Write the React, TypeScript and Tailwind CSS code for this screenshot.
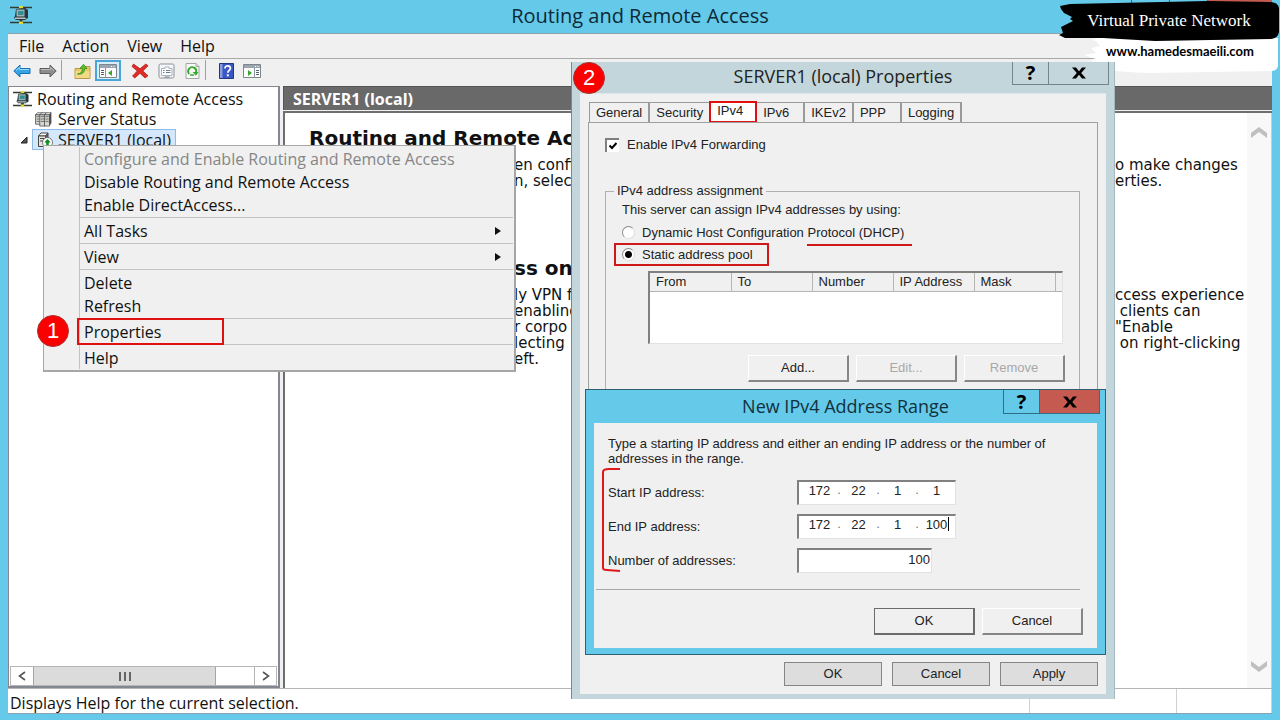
import {useState} from 'react';
import type {ReactNode} from 'react';
import clsx from 'clsx';

const UI = "font-['Open_Sans','Noto_Sans',sans-serif]";
const CLASSIC = "font-['Liberation_Sans',Arial,sans-serif]";
const DOC = "font-['DejaVu_Sans',Verdana,sans-serif]";

/* ---------- Icons ---------- */

function RoutingIcon({className}: {className?: string}) {
  return (
    <svg viewBox="0 0 22 18" className={className} aria-hidden="true">
      <path d="M0 1.5h22M0 16.5h22" stroke="#333c33" strokeWidth="1.6" />
      <path d="M11 1v16" stroke="#333c33" strokeWidth="3" />
      <path d="M9 0h4v2.5H9zM9 15.5h4V18H9z" fill="#e4dc2c" />
      <path d="M6 3l9-1 3 2v8l-3 2H6l-2-2 1-2z" fill="#26363a" />
      <path d="M6.5 3.5h8v7h-8z" fill="#9fb2b4" />
      <path d="M8 5h5.5v4H8z" fill="#2f8f94" />
      <path d="M5 11.5h10l1.5 1.5H5z" fill="#b9c4c4" />
    </svg>
  );
}

function ServersIcon({className}: {className?: string}) {
  return (
    <svg viewBox="0 0 18 16" className={className} aria-hidden="true">
      {[0.5, 5, 10].map((x, i) => (
        <g key={x} stroke="#4a4a4a" strokeWidth="0.8">
          <path d={`M${x} 3l2-2.2h5l-1.5 2.2z`} fill="#f5f5f5" />
          <path d={`M${x} 3h5.5v${i === 0 ? 10 : 12}H${x}z`} fill="#d9d9d4" />
          <path d={`M${x + 5.5} 3l1.5-2.2v11l-1.5 2z`} fill="#55534e" />
          <path d={`M${x + 1} 5h3.5M${x + 1} 7.5h3.5M${x + 1} 10h3.5`} />
        </g>
      ))}
    </svg>
  );
}

function ServerUpIcon({className}: {className?: string}) {
  return (
    <svg viewBox="0 0 16 16" className={className} aria-hidden="true">
      <path d="M1.5 4l2.5-3h7L8.5 4z" fill="#fff" stroke="#444" />
      <path d="M1.5 4h7v10.5h-7z" fill="#e4e4e0" stroke="#444" />
      <path d="M8.5 4L11 1v10" fill="#666" stroke="#444" />
      <path d="M3 6.5h4M3 9h4" stroke="#444" />
      <circle cx="10.5" cy="10.5" r="5" fill="#fff" stroke="#555" strokeWidth="0.8" />
      <path d="M10.5 7l3.3 3.6h-2V14H9.2v-3.4h-2z" fill="#118a22" />
    </svg>
  );
}

function ArrowIcon({back}: {back?: boolean}) {
  return (
    <svg viewBox="0 0 18 14" className="h-[14px] w-[18px]" aria-hidden="true">
      <path
        d={back ? 'M.8 7L7 1v3.5h10v5H7V13z' : 'M17.2 7L11 1v3.5H1v5h10V13z'}
        fill={back ? '#35a3e6' : '#8d8d8d'}
        stroke={back ? '#1672b8' : '#5e5e5e'}
      />
      <path
        d={back ? 'M3 6.5L6.5 3.5v2H16' : 'M15 6.5L11.5 3.5v2H2'}
        stroke={back ? '#9bd8fa' : '#bdbdbd'}
        fill="none"
      />
    </svg>
  );
}

function FolderUpIcon() {
  return (
    <svg viewBox="0 0 17 16" className="h-4 w-[17px]" aria-hidden="true">
      <path d="M1 5.5h5l1.5-2H16v12H1z" fill="#e9c766" stroke="#bd9a42" />
      <path d="M1.5 8H15.5v7h-14z" fill="#f2d988" />
      <path
        d="M3.5 11c3.5-.5 5-2.5 5-5.5H6L9.5 1.2 13 5.5h-2.3C10.7 9.5 8 12 3.5 11z"
        fill="#56c02c"
        stroke="#2f8e16"
        strokeWidth="0.7"
      />
    </svg>
  );
}

function PaneIcon({right}: {right?: boolean}) {
  return (
    <svg viewBox="0 0 18 14" className="h-[14px] w-[18px]" aria-hidden="true">
      <path d="M.5.5h17v13H.5z" fill="#fdfdfd" stroke="#7d868f" />
      <path d="M1 1h16v3H1z" fill="#9aa5b0" />
      <path d="M12 2.5h1M14.5 2.5h1" stroke="#fff" />
      <path d={right ? 'M11.5 4v9.5' : 'M6.5 4v9.5'} stroke="#8b949c" />
      <path
        d={
          right
            ? 'M13 6.5h3M13 8.5h3M13 10.5h3'
            : 'M2 6.5h3M2 8.5h3M2 10.5h3'
        }
        stroke="#56616c"
      />
      <path d={right ? 'M5 6l4 3-4 3z' : 'M13 6v6L9 9z'} fill="#36a52e" />
    </svg>
  );
}

function DeleteIcon() {
  return (
    <svg viewBox="0 0 18 16" className="h-4 w-[18px]" aria-hidden="true">
      <path
        d="M2.5 1L1 3.5 6.3 8 1.5 13l2.3 2L9 10.3 14 15l3-2.2L11.8 8 17 2.8 14.8 1 9 5.8z"
        fill="#e02b26"
        stroke="#a81713"
        strokeWidth="0.7"
      />
    </svg>
  );
}

function SheetIcon() {
  return (
    <svg viewBox="0 0 17 16" className="h-4 w-[17px]" aria-hidden="true">
      <rect x="1" y="1" width="15" height="14" rx="1.5" fill="#f4f6f8" stroke="#8b9095" />
      <path d="M3.5 5.5H7V4h4v1.5h3v7H3.5z" fill="#fff" stroke="#97a2ae" strokeWidth="0.8" />
      <path d="M5 7.5h1.5M8 7.5h4.5M5 9.5h1.5M8 9.5h4.5M6.5 14h5" stroke="#6d7c8d" />
    </svg>
  );
}

function RefreshIcon() {
  return (
    <svg viewBox="0 0 15 16" className="h-4 w-[15px]" aria-hidden="true">
      <path d="M1 .5h10l3 3v12H1z" fill="#fafafa" stroke="#a5a5a5" />
      <path d="M11 .5v3h3" fill="#ddd" stroke="#a5a5a5" />
      <path d="M4.3 11A4 4 0 1 1 11 9.5" fill="none" stroke="#35ab2c" strokeWidth="1.9" />
      <path d="M7.5 9h6L11 12.8z" fill="#35ab2c" />
      <path d="M5 12h4" stroke="#35ab2c" strokeWidth="1.5" />
    </svg>
  );
}

function HelpIcon() {
  return (
    <svg viewBox="0 0 15 16" className="h-4 w-[15px]" aria-hidden="true">
      <path d="M.5.5h14v15H.5z" fill="#3a55c4" stroke="#24367e" />
      <path d="M1 1h2.5v14H1z" fill="#8b9be0" />
      <path
        d="M6 5.5C6 3.5 7.3 2.8 8.7 2.8s2.7.8 2.7 2.5c0 2-2.6 2.2-2.6 4.4"
        fill="none"
        stroke="#fff"
        strokeWidth="1.8"
      />
      <path d="M7.8 11.3h2v2h-2z" fill="#fff" />
    </svg>
  );
}

function Chevron({down}: {down?: boolean}) {
  return (
    <svg viewBox="0 0 18 13" className="h-[13px] w-[18px]" aria-hidden="true">
      <path
        d={down ? 'M1 1l8 6 8-6v5l-8 6-8-6z' : 'M1 12l8-6 8 6V7L9 1 1 7z'}
        fill="#bfbfbf"
      />
    </svg>
  );
}

/* ---------- Shared bits ---------- */

function StepBadge({n, className}: {n: number; className: string}) {
  return (
    <span
      className={clsx(
        "absolute z-30 flex size-8 items-center justify-center rounded-full border border-[#a33] bg-[#fb0000] font-['Liberation_Sans',sans-serif] text-[22px] leading-none text-white",
        className,
      )}
    >
      {n}
    </span>
  );
}

function ClassicButton({
  children,
  disabled,
  primary,
}: {
  children: ReactNode;
  disabled?: boolean;
  primary?: boolean;
}) {
  return (
    <button
      disabled={disabled}
      className={clsx(
        'h-[27px] w-[101px] border bg-[#f0f0f0] text-[13px] leading-4',
        primary
          ? 'border-r-2 border-b-2 border-[#6b6b6b]'
          : 'border-r-2 border-b-2 border-t-white border-l-white border-r-[#868686] border-b-[#868686]',
        disabled ? 'text-[#a8a8a8]' : 'text-[#222]',
      )}
    >
      {children}
    </button>
  );
}

function CaptionButtons({active}: {active?: boolean}) {
  const edge = active ? 'h-6 border-[#2f6f86]' : 'h-[23px] border-[#6f868d]';
  return (
    <div className="mr-[5px] flex justify-self-end self-start text-[20px] leading-none font-bold text-black">
      <button className={clsx('w-[37px] border border-t-0', edge)} aria-label="Help">
        ?
      </button>
      <button
        className={clsx(
          'flex w-[60px] items-center justify-center border border-t-0 border-l-0',
          edge,
          active && 'bg-[#c45a50]',
        )}
        aria-label="Close"
      >
        <svg viewBox="0 0 14 12" className="h-3 w-[14px]" aria-hidden="true">
          <path d="M0 .5h4L7 4.3 10 .5h4L9.2 6l4.8 5.5h-4L7 7.7l-3 3.8H0L4.8 6z" fill="#000" />
        </svg>
      </button>
    </div>
  );
}

/* ---------- Console window ---------- */

function Toolbar() {
  const item = 'flex h-[21px] w-[26px] items-center justify-center';
  return (
    <div className="flex h-7 items-start border-t border-[#a9a9a9] pt-px pl-px">
      <button className={item} aria-label="Back">
        <ArrowIcon back />
      </button>
      <button className={item} aria-label="Forward">
        <ArrowIcon />
      </button>
      <span className="mr-[7px] h-5 w-px bg-[#a0a0a0]" />
      <button className={item} aria-label="Up one level">
        <FolderUpIcon />
      </button>
      <button
        className="mr-[6px] flex h-[21px] w-[26px] items-center justify-center border-2 border-[#4aa5d8] bg-[#d9edf8]"
        aria-label="Show or hide console tree"
      >
        <PaneIcon />
      </button>
      <button className={item} aria-label="Delete">
        <DeleteIcon />
      </button>
      <button className={item} aria-label="Properties">
        <SheetIcon />
      </button>
      <button className={item} aria-label="Refresh">
        <RefreshIcon />
      </button>
      <span className="mr-[7px] h-5 w-px bg-[#a0a0a0]" />
      <button className={item} aria-label="Help">
        <HelpIcon />
      </button>
      <button className={item} aria-label="Show or hide action pane">
        <PaneIcon right />
      </button>
    </div>
  );
}

function ConsoleTree() {
  return (
    <nav className="flex w-[272px] flex-none flex-col border border-r-2 border-b-2 border-[#828790] bg-white text-[16px] leading-5">
      <ul className="flex-1 pt-px">
        <li className="flex h-[21px] items-center gap-[5px] pl-1">
          <RoutingIcon className="h-4 w-[19px]" />
          Routing and Remote Access
        </li>
        <li className="flex h-5 items-center gap-[5px] pl-[25px]">
          <ServersIcon className="h-[15px] w-[19px]" />
          Server Status
        </li>
        <li className="flex h-[21px] items-center pl-[11px]">
          <svg viewBox="0 0 8 8" className="mr-1 size-2" aria-hidden="true">
            <path d="M7 1v6H1z" fill="#555" stroke="#222" />
          </svg>
          <span className="flex h-[21px] items-center gap-[5px] border border-[#8fbbe8] bg-[#d5e7fb] pr-1 pl-1">
            <ServerUpIcon className="size-4" />
            SERVER1 (local)
          </span>
        </li>
      </ul>
      <div className="mx-px flex h-5 border border-[#b5b5b5] text-[#555]">
        <button className="flex w-[22px] items-center justify-center" aria-label="Scroll left">
          <svg viewBox="0 0 8 10" className="h-[10px] w-2" aria-hidden="true">
            <path d="M7 1L1.5 5 7 9" fill="none" stroke="currentColor" strokeWidth="1.6" />
          </svg>
        </button>
        <div className="flex w-[183px] items-center justify-center gap-[3px] border-x border-[#a5a5a5] bg-[#dbdbdb]">
          <i className="h-[9px] w-[2px] bg-[#666]" />
          <i className="h-[9px] w-[2px] bg-[#666]" />
          <i className="h-[9px] w-[2px] bg-[#666]" />
        </div>
        <button
          className="ml-auto flex w-[22px] items-center justify-center border-l border-[#b5b5b5]"
          aria-label="Scroll right"
        >
          <svg viewBox="0 0 8 10" className="h-[10px] w-2" aria-hidden="true">
            <path d="M1 1l5.5 4L1 9" fill="none" stroke="currentColor" strokeWidth="1.6" />
          </svg>
        </button>
      </div>
    </nav>
  );
}

const introLines = [
  ['en confi', 'o make changes'],
  ['n, selec', 'erties.'],
];

const accessLines = [
  ['ly VPN f', 'ccess experience'],
  ['enabling', ' clients can'],
  ['r corpo', '"Enable'],
  ['lecting', ' on right-clicking'],
  ['eft.', ''],
];

function DocLines({lines}: {lines: string[][]}) {
  return (
    <div className="text-[15px] leading-4">
      {lines.map(([left, right]) => (
        <div key={left} className="flex min-h-4 pl-[205px] whitespace-pre">
          <span className="w-[601px] flex-none">{left}</span>
          <span>{right}</span>
        </div>
      ))}
    </div>
  );
}

function DetailsPane() {
  return (
    <section className="flex min-w-0 flex-1 flex-col">
      <h2 className="h-6 border-t border-l border-[#555] bg-[#696969] pl-[9px] text-[16px] leading-6 font-bold text-white">
        SERVER1 (local)
      </h2>
      <div className="mt-px flex flex-1 border-t-2 border-l-2 border-[#6e6e6e] bg-white">
        <article className={clsx('min-w-0 flex-1 overflow-hidden pt-[15px] pl-6', DOC)}>
          <h3 className="text-[20px] leading-5 font-bold whitespace-nowrap">
            Routing and Remote Ac
          </h3>
          <div className="mt-[9px]">
            <DocLines lines={introLines} />
          </div>
          <h3 className="mt-[69px] pl-[205px] text-[20px] leading-5 font-bold">ss on</h3>
          <div className="mt-[9px]">
            <DocLines lines={accessLines} />
          </div>
        </article>
        <div className="flex w-[25px] flex-none flex-col items-center justify-between border-r border-[#ccc] bg-[#f8f8f8] pt-[13px] pb-[15px]">
          <button aria-label="Scroll up">
            <Chevron />
          </button>
          <button aria-label="Scroll down">
            <Chevron down />
          </button>
        </div>
      </div>
    </section>
  );
}

/* ---------- Context menu ---------- */

function MenuItem({
  label,
  disabled,
  submenu,
  marked,
}: {
  label: string;
  disabled?: boolean;
  submenu?: boolean;
  marked?: boolean;
}) {
  return (
    <li className="relative pl-[34px]">
      <button
        disabled={disabled}
        className={clsx(
          'flex h-[23px] w-full items-center justify-between border-l border-[#c3c3c3] pt-px pr-3 pl-1 text-left',
          disabled ? 'text-[#868686]' : 'text-[#111]',
        )}
      >
        {label}
        {submenu && (
          <svg viewBox="0 0 6 8" className="h-2 w-[6px]" aria-hidden="true">
            <path d="M0 0l6 4-6 4z" fill="#111" />
          </svg>
        )}
      </button>
      {marked && (
        <span className="absolute -top-[2px] left-8 h-[27px] w-[147px] border-2 border-[#e01010]" />
      )}
    </li>
  );
}

function MenuSeparator() {
  return (
    <li className="pl-[34px]">
      <div className="border-l border-[#c3c3c3] py-px">
        <div className="h-px bg-[#c3c3c3]" />
      </div>
    </li>
  );
}

function ContextMenu() {
  return (
    <ul className="absolute top-[145px] left-[43px] z-10 w-[473px] border border-r-2 border-b-2 border-[#a6a6a6] bg-[#f0f0f0] px-px py-px text-[16px] leading-5">
      <MenuItem label="Configure and Enable Routing and Remote Access" disabled />
      <MenuItem label="Disable Routing and Remote Access" />
      <MenuItem label="Enable DirectAccess..." />
      <MenuSeparator />
      <MenuItem label="All Tasks" submenu />
      <MenuSeparator />
      <MenuItem label="View" submenu />
      <MenuSeparator />
      <MenuItem label="Delete" />
      <MenuItem label="Refresh" />
      <MenuSeparator />
      <MenuItem label="Properties" marked />
      <MenuSeparator />
      <MenuItem label="Help" />
    </ul>
  );
}

/* ---------- Properties dialog ---------- */

const tabs = ['General', 'Security', 'IPv4', 'IPv6', 'IKEv2', 'PPP', 'Logging'];

function PropertiesDialog() {
  const [tab, setTab] = useState('IPv4');
  const [forwarding, setForwarding] = useState(true);
  const [mode, setMode] = useState('static');

  const radio =
    'size-[13px] appearance-none rounded-full border border-[#8a8a8a] border-r-[#ddd] border-b-[#ddd] bg-white checked:bg-[radial-gradient(circle,#000_0_3px,#fff_4px)]';

  return (
    <div
      role="dialog"
      className="absolute top-[62px] left-[571px] z-20 flex h-[637px] w-[544px] flex-col border-x border-l-[#6f8d98] border-r-[#a3b8bf] bg-[#c2d6db] pb-[5px]"
    >
      <div className="grid h-[31px] grid-cols-[1fr_auto_1fr] items-center">
        <span />
        <h2 className={clsx('pb-[3px] text-[18px] leading-6 text-[#222]', UI)}>
          SERVER1 (local) Properties
        </h2>
        <CaptionButtons />
      </div>
      <div
        className={clsx(
          'mx-2 flex flex-1 flex-col border-t border-[#dfe6e8] bg-[#f0f0f0] px-2 pt-2 text-[13px] leading-4 text-[#222]',
          CLASSIC,
        )}
      >
        <div role="tablist" className="flex h-5 pl-px">
          {tabs.map((name) => (
            <button
              key={name}
              role="tab"
              aria-selected={tab === name}
              onClick={() => setTab(name)}
              className={clsx(
                'min-w-12 px-[6px] text-left',
                tab === name
                  ? '-mt-px -ml-[2px] h-[22px] border-2 border-[#e01010] bg-white pr-2 pb-[2px]'
                  : 'h-5 border-t border-r-2 border-[#9a9a9a] first:border-l',
              )}
            >
              {name}
            </button>
          ))}
        </div>
        <div className="flex-1 border border-b-0 border-[#a0a0a0] bg-[#f0f0f0] pt-[14px] pr-[17px] pl-4">
          <label className="flex w-fit items-center gap-2">
            <span className="relative flex">
              <input
                type="checkbox"
                checked={forwarding}
                onChange={(e) => setForwarding(e.target.checked)}
                className="size-[14px] appearance-none border-t-2 border-l-2 border-[#808080] bg-white"
              />
              {forwarding && (
                <svg
                  viewBox="0 0 8 8"
                  className="pointer-events-none absolute top-1 left-1 size-2"
                  aria-hidden="true"
                >
                  <path d="M.5 3.5L3 6l4.5-5" fill="none" stroke="#000" strokeWidth="2" />
                </svg>
              )}
            </span>
            Enable IPv4 Forwarding
          </label>

          <fieldset className="mt-[30px] h-[462px] border border-[#b0b0b0] pr-[14px] pl-4">
            <legend className="-ml-2 px-[3px]">IPv4 address assignment</legend>
            <p className="py-[3px]">This server can assign IPv4 addresses by using:</p>
            <label className="flex h-[22px] w-fit items-center gap-[7px] pt-px">
              <input
                type="radio"
                name="assignment"
                checked={mode === 'dhcp'}
                onChange={() => setMode('dhcp')}
                className={radio}
              />
              <span>
                Dynamic Host Configuration{' '}
                <span className="relative">
                  Protocol (DHCP)
                  <i className="absolute -right-2 -bottom-[6px] left-0 h-[2px] bg-[#d01818]" />
                </span>
              </span>
            </label>
            <label className="relative flex h-[22px] w-fit items-center gap-[7px] pt-px">
              <input
                type="radio"
                name="assignment"
                checked={mode === 'static'}
                onChange={() => setMode('static')}
                className={radio}
              />
              Static address pool
              <i className="absolute -right-4 -left-2 h-[23px] border-2 border-[#d01818]" />
            </label>

            <div className="mt-[6px] mr-[2px] ml-[26px] h-[73px] border-t-2 border-r border-b border-l-2 border-t-[#808080] border-r-[#e2e2e2] border-b-[#e2e2e2] border-l-[#808080] bg-white">
              <table className="w-full table-fixed border-collapse bg-[#f0f0f0]">
                <thead>
                  <tr className="h-[18px]">
                    {['From', 'To', 'Number', 'IP Address', 'Mask'].map((name) => (
                      <th
                        key={name}
                        className="w-[81px] border-r border-b border-[#b5b5b5] pl-[6px] text-left leading-4 font-normal"
                      >
                        {name}
                      </th>
                    ))}
                    <th className="border-b border-[#b5b5b5]" />
                  </tr>
                </thead>
              </table>
            </div>

            <div className="mt-[11px] flex justify-end gap-[7px]">
              <ClassicButton>Add...</ClassicButton>
              <ClassicButton disabled>Edit...</ClassicButton>
              <ClassicButton disabled>Remove</ClassicButton>
            </div>
          </fieldset>
        </div>
        <div className="flex flex-none justify-end gap-[10px] pt-2 pb-2">
          {['OK', 'Cancel', 'Apply'].map((name) => (
            <button
              key={name}
              className="h-[24px] w-[98px] border border-[#858585] bg-[#dddddd]"
            >
              {name}
            </button>
          ))}
        </div>
      </div>
      <StepBadge n={2} className="top-0 left-px" />
    </div>
  );
}

/* ---------- Address range dialog ---------- */

function IpField({id, value, caret}: {id: string; value: string; caret?: boolean}) {
  const octets = value.split('.');
  return (
    <div className="relative flex h-[25px] w-[159px] border-t-2 border-r border-b border-l-2 border-t-[#808080] border-r-[#e2e2e2] border-b-[#e2e2e2] border-l-[#808080] bg-white pl-[6px]">
      {octets.map((octet, i) => (
        <span key={i} className="flex h-[17px]">
          <input
            id={i === 0 ? id : undefined}
            aria-label={i === 0 ? undefined : `Octet ${i + 1}`}
            defaultValue={octet}
            className="w-[29px] text-center outline-none"
          />
          {i < 3 && <span className="w-[10px] text-center text-[#777]">.</span>}
        </span>
      ))}
      {caret && <i className="absolute top-px right-[6px] h-[14px] w-px bg-black" />}
    </div>
  );
}

function AddressRangeDialog() {
  return (
    <div
      role="dialog"
      className="absolute top-[389px] left-[585px] z-20 w-[521px] border border-[#2f5f73] bg-[#65c9ea] px-2 pb-[6px]"
    >
      <div className="-mx-2 grid h-[33px] grid-cols-[1fr_auto_1fr] items-center">
        <span />
        <h2 className={clsx('pb-px text-[18px] leading-6 text-[#12313c]', UI)}>
          New IPv4 Address Range
        </h2>
        <CaptionButtons active />
      </div>
      <div
        className={clsx(
          'relative bg-[#f0f0f0] pt-[13px] pb-[13px] text-[13px] leading-[15px] text-[#222]',
          CLASSIC,
        )}
      >
        <p className="pr-6 pl-[14px]">
          Type a starting IP address and either an ending IP address or the number of addresses
          in the range.
        </p>
        <div className="mt-[14px] grid grid-cols-[189px_auto] items-center justify-start gap-y-[9px] pl-[14px]">
          <label htmlFor="start-ip">Start IP address:</label>
          <IpField id="start-ip" value="172.22.1.1" />
          <label htmlFor="end-ip">End IP address:</label>
          <IpField id="end-ip" value="172.22.1.100" caret />
          <label htmlFor="count">Number of addresses:</label>
          <input
            id="count"
            defaultValue="100"
            className="h-[25px] w-[135px] border-t-2 border-r border-b border-l-2 border-t-[#808080] border-r-[#e2e2e2] border-b-[#e2e2e2] border-l-[#808080] bg-white pr-px pb-1 text-right outline-none"
          />
        </div>
        <hr className="mt-4 mr-[17px] ml-[2px] border-[#a8a8a8]" />
        <div className="mt-[18px] flex justify-end gap-[7px] pr-[14px]">
          <ClassicButton primary>OK</ClassicButton>
          <ClassicButton>Cancel</ClassicButton>
        </div>
        <svg
          viewBox="0 0 20 106"
          className="absolute top-11 left-[7px] h-[106px] w-5"
          aria-hidden="true"
        >
          <path
            d="M19 2H8Q2 2 2 5v96q0 2 4 2l13 1"
            fill="none"
            stroke="#e01818"
            strokeWidth="2"
          />
        </svg>
      </div>
    </div>
  );
}

/* ---------- Banner ---------- */

function Banner() {
  return (
    <div className="absolute top-0 right-0 z-10 h-[74px] w-[222px] text-center">
      <svg viewBox="0 0 222 74" className="absolute inset-0 h-full w-full" aria-hidden="true">
        <path
          d="M36 38h184v28q-1 5-7 5l-60 1-62 1q-36-1-50-5l-8-8 5-1-12-4 12-2-5-5 9-2z"
          fill="#fff"
        />
        <path
          d="M2 6l10-2 46-1L150 1l62 1q8 0 9 6v24q-1 6-8 7l-60 1-56 1-52-3-38 0-6-3 4-2-2-6 12-6-3-2 2-2-8-4-3-4z"
          fill="#000"
        />
        <path d="M34 39l4 2M40 39l3 2M46 39l5 2M54 40l6 1" stroke="#fff" strokeWidth="1" />
      </svg>
      <p className="relative pt-[10px] font-['Liberation_Serif',serif] text-[17px] leading-[22px] text-white">
        Virtual Private Network
      </p>
      <a
        href="#site"
        className="relative block pt-[7px] pl-[22px] font-['Lato',sans-serif] text-[13px] leading-6 font-bold text-black"
      >
        www.hamedesmaeili.com
      </a>
    </div>
  );
}

export default function App() {
  return (
    <div
      className={clsx(
        'relative flex min-h-screen flex-col overflow-hidden bg-[#65c9ea] px-2 pb-[6px] text-[#111]',
        UI,
      )}
    >
      <header className="grid h-[33px] grid-cols-[1fr_auto_1fr]">
        <RoutingIcon className="mt-[6px] ml-[2px] h-[18px] w-[22px]" />
        <h1 className="text-[20px] leading-8 text-[#0d2a36]">Routing and Remote Access</h1>
        <div className="flex h-6 justify-self-end">
          <button className="w-[39px] border-x border-[#2f6f86]" aria-label="Minimize" />
          <button className="w-[37px]" aria-label="Maximize" />
          <button className="w-[65px] border-l border-[#2f6f86] bg-[#c45a50]" aria-label="Close" />
        </div>
      </header>
      <main className="flex flex-1 flex-col border-t border-b border-[#8ba3ac] bg-[#f0f0f0]">
        <div className="flex h-6 gap-[18px] pl-[11px] text-[16px] leading-[22px]">
          <button>File</button>
          <button>Action</button>
          <button>View</button>
          <button>Help</button>
        </div>
        <Toolbar />
        <div className="flex flex-1 gap-[3px]">
          <ConsoleTree />
          <DetailsPane />
        </div>
        <footer className="flex h-[25px] flex-none border-t border-[#b5b5b5] bg-white text-[16px] leading-7">
          <p className="flex-1 pl-[2px]">Displays Help for the current selection.</p>
          <span className="w-[147px] border-l border-[#d0d0d0]" />
          <span className="w-[96px] border-x border-[#d0d0d0]" />
        </footer>
      </main>

      <ContextMenu />
      <StepBadge n={1} className="top-[315px] left-[37px]" />
      <Banner />
      <PropertiesDialog />
      <AddressRangeDialog />
    </div>
  );
}
